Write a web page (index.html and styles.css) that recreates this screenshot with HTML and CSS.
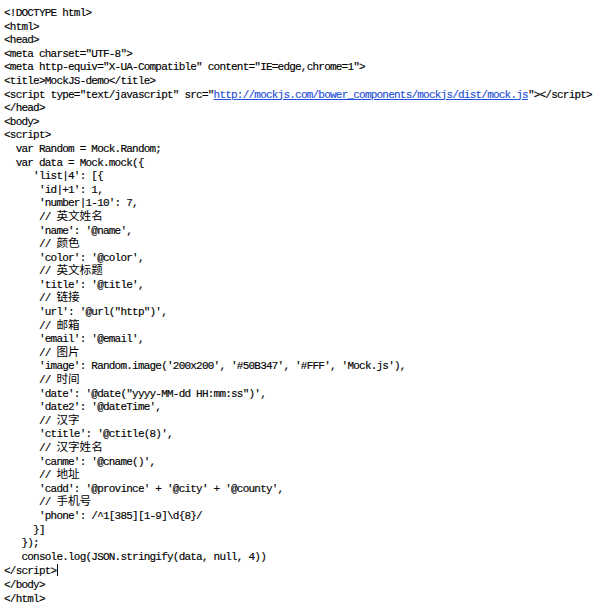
FILE: index.html
```html
<!DOCTYPE html>
<html>
<head>
<meta charset="UTF-8">
<title>MockJS-demo source</title>
<link rel="stylesheet" href="styles.css">
</head>
<body>
<pre class="code">&lt;!DOCTYPE html&gt;
&lt;html&gt;
&lt;head&gt;
&lt;meta charset="UTF-8"&gt;
&lt;meta http-equiv="X-UA-Compatible" content="IE=edge,chrome=1"&gt;
&lt;title&gt;MockJS-demo&lt;/title&gt;
&lt;script type="text/javascript" src="<a class="link" href="#">http://mockjs.com/bower_components/mockjs/dist/mock.js</a>"&gt;&lt;/script&gt;
&lt;/head&gt;
&lt;body&gt;
&lt;script&gt;
  var Random = Mock.Random;
  var data = Mock.mock({
     'list|4': [{
      'id|+1': 1,
      'number|1-10': 7,
      // <span class="zh">英文姓名</span>
      'name': '@name',
      // <span class="zh">颜色</span>
      'color': '@color',
      // <span class="zh">英文标题</span>
      'title': '@title',
      // <span class="zh">链接</span>
      'url': '@url("http")',
      // <span class="zh">邮箱</span>
      'email': '@email',
      // <span class="zh">图片</span>
      'image': Random.image('200x200', '#50B347', '#FFF', 'Mock.js'),
      // <span class="zh">时间</span>
      'date': '@date("yyyy-MM-dd HH:mm:ss")',
      'date2': '@dateTime',
      // <span class="zh">汉字</span>
      'ctitle': '@ctitle(8)',
      // <span class="zh">汉字姓名</span>
      'canme': '@cname()',
      // <span class="zh">地址</span>
      'cadd': '@province' + '@city' + '@county',
      // <span class="zh">手机号</span>
      'phone': /^1[385][1-9]\d{8}/
     }]
   });
   console.log(JSON.stringify(data, null, 4))
&lt;/script&gt;<span class="caret"></span>
&lt;/body&gt;
&lt;/html&gt;</pre>
</body>
</html>
```

FILE: styles.css
```css
html, body {
  margin: 0;
  padding: 0;
  background: #ffffff;
}

.code {
  margin: 0;
  padding: 7px 0 0 4px;
  font-family: "Liberation Mono", "Noto Sans CJK SC", monospace;
  font-size: 11px;
  letter-spacing: -0.78px;
  line-height: 13.6px;
  color: #000000;
  white-space: pre;
  -webkit-text-stroke: 0.15px #000000;
}

.link {
  color: #1f4fd8;
  text-decoration: underline;
  -webkit-text-stroke: 0.15px #1f4fd8;
}

.zh {
  font-family: "Noto Sans CJK SC", sans-serif;
  font-size: 11.6px;
  letter-spacing: 0;
  line-height: 0;
  -webkit-text-stroke: 0;
}

.caret {
  display: inline-block;
  width: 1px;
  height: 12px;
  background: #000000;
  vertical-align: -2px;
  margin-left: 1px;
}
```
